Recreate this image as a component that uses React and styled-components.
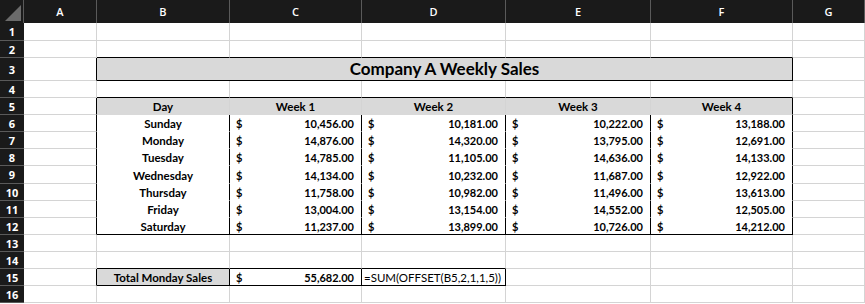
import React from 'react';
import styled, { createGlobalStyle } from 'styled-components';

const GRID = '#d4d4d4';
const INK = '#000';
const FILL = '#d9d9d9';
const HEAD_BG = '#1a1a1a';
const HEAD_LINE = '#5a5a5a';

const COLS = ['A', 'B', 'C', 'D', 'E', 'F', 'G'];
const COL_WIDTHS = [24, 73, 133, 132, 144, 145, 142, 72];
// header + rows 1..16, each height includes its bottom gridline
const ROW_HEIGHTS = [23, 18, 17, 23, 17, 17, 17, 17, 17, 18, 17, 17, 17, 17, 17, 17, 17];

const WEEKS = ['Week 1', 'Week 2', 'Week 3', 'Week 4'];
const SALES = [
  ['Sunday', '10,456.00', '10,181.00', '10,222.00', '13,188.00'],
  ['Monday', '14,876.00', '14,320.00', '13,795.00', '12,691.00'],
  ['Tuesday', '14,785.00', '11,105.00', '14,636.00', '14,133.00'],
  ['Wednesday', '14,134.00', '10,232.00', '11,687.00', '12,922.00'],
  ['Thursday', '11,758.00', '10,982.00', '11,496.00', '13,613.00'],
  ['Friday', '13,004.00', '13,154.00', '14,552.00', '12,505.00'],
  ['Saturday', '11,237.00', '13,899.00', '10,726.00', '14,212.00'],
];

// build the sheet: rows 1..16, columns A..G
const buildSheet = () => {
  const sheet = {};
  for (let r = 1; r <= 16; r++) {
    sheet[r] = COLS.map(() => ({}));
  }
  // title, merged B:F (covered slots point back to the merged cell)
  const title = { kind: 'title', text: 'Company A Weekly Sales', span: 5, fill: FILL, box: { t: 1, r: 1, b: 1, l: 1 } };
  sheet[3][1] = title;
  for (let c = 2; c <= 5; c++) sheet[3][c] = { ...title, covered: true };

  // header row
  ['Day', ...WEEKS].forEach((text, i) => {
    sheet[5][i + 1] = {
      kind: 'head', text, fill: FILL, sep: i < 4,
      box: { t: 1, l: i === 0, r: i === 4 },
    };
  });

  // data rows
  SALES.forEach((row, j) => {
    const r = 6 + j;
    row.forEach((val, i) => {
      sheet[r][i + 1] = {
        kind: i === 0 ? 'day' : 'money', text: val, fill: '#fff',
        box: { l: 1, r: 1, b: r === 12 },
      };
    });
  });

  // total row
  sheet[15][1] = { kind: 'day', text: 'Total Monday Sales', fill: FILL, box: { t: 1, r: 1, b: 1, l: 1 } };
  sheet[15][2] = { kind: 'money', text: '55,682.00', box: { t: 1, r: 1, b: 1, l: 1 } };
  sheet[15][3] = { kind: 'formula', text: '=SUM(OFFSET(B5,2,1,1,5))', box: { t: 1, r: 1, b: 1, l: 1 } };
  return sheet;
};

const SHEET = buildSheet();

const edges = (r, c) => {
  const cell = SHEET[r][c];
  const span = cell.span || 1;
  const next = SHEET[r][c + span];
  const below = r < 16 ? SHEET[r + 1][c] : null;
  const box = cell.box || {};

  let right = GRID;
  if (box.r || (next && next.box && next.box.l)) right = INK;
  else if (cell.sep) right = GRID;
  else if (cell.fill && next && next.fill) right = cell.fill;

  let bottom = GRID;
  if (box.b || (below && below.box && below.box.t)) bottom = INK;
  else if (cell.fill && below && below.fill) bottom = cell.fill;

  return { right, bottom };
};

const GlobalStyle = createGlobalStyle`
  html, body {
    margin: 0;
    padding: 0;
    background: #fff;
  }
  body {
    font-family: Lato, "Liberation Sans", sans-serif;
    color: #000;
  }
`;

const Sheet = styled.div`
  display: grid;
  grid-template-columns: ${COL_WIDTHS.map(w => `${w}px`).join(' ')};
  grid-template-rows: ${ROW_HEIGHTS.map(h => `${h}px`).join(' ')};
  width: 865px;
  height: 304px;
  overflow: hidden;
  background: #fff;
`;

const Corner = styled.div`
  background: ${HEAD_BG};
  border-right: 1px solid ${HEAD_LINE};
  display: flex;
  align-items: flex-end;
  justify-content: flex-end;
  svg { display: block; }
`;

const ColHead = styled.div`
  background: ${HEAD_BG};
  color: #fff;
  border-right: 1px solid ${HEAD_LINE};
  display: flex;
  align-items: center;
  justify-content: center;
  font-family: "Open Sans", sans-serif;
  font-size: 11px;
  font-weight: 600;
`;

const RowHead = styled.div`
  background: ${HEAD_BG};
  color: #fff;
  border-bottom: 1px solid ${HEAD_LINE};
  display: flex;
  align-items: center;
  justify-content: center;
  font-family: "Open Sans", sans-serif;
  font-size: 11px;
  font-weight: 700;
`;

const Cell = styled.div`
  grid-column: span ${p => p.$span};
  display: flex;
  align-items: center;
  justify-content: ${p => p.$align};
  padding: ${p => p.$pad};
  background: ${p => p.$fill};
  border-right: 1px solid ${p => p.$right};
  border-bottom: 1px solid ${p => p.$bottom};
  font-size: ${p => p.$size}px;
  font-weight: ${p => (p.$bold ? 700 : 400)};
  white-space: nowrap;
  overflow: hidden;
  min-width: 0;
`;

const Money = styled.span`
  flex: 1;
  display: flex;
  justify-content: space-between;
`;

const KIND = {
  title: { align: 'center', pad: '0 0 1px', size: 17, bold: true },
  head: { align: 'center', pad: '1px 0 0', size: 11.5, bold: true },
  day: { align: 'center', pad: '1px 0 0', size: 11.5, bold: true },
  money: { align: 'stretch', pad: '1px 7px 0 6px', size: 11, bold: true },
  formula: { align: 'flex-start', pad: '1px 0 0 2px', size: 11.5, bold: false },
  empty: { align: 'flex-start', pad: '0', size: 11, bold: false },
};

const SheetCell = ({ r, c }) => {
  const cell = SHEET[r][c];
  const { right, bottom } = edges(r, c);
  const k = KIND[cell.kind || 'empty'];
  return (
    <Cell
      $span={cell.span || 1}
      $align={k.align}
      $pad={k.pad}
      $size={k.size}
      $bold={k.bold}
      $fill={cell.fill || '#fff'}
      $right={right}
      $bottom={bottom}
    >
      {cell.kind === 'money' ? (
        <Money>
          <span>$</span>
          <span>{cell.text}</span>
        </Money>
      ) : (
        cell.text
      )}
    </Cell>
  );
};

const App = () => (
  <>
    <GlobalStyle />
    <Sheet>
      <Corner>
        <svg width="23" height="23" viewBox="0 0 23 23">
          <polygon points="5,21 21,5 21,21" fill="#6b6b6b" />
        </svg>
      </Corner>
      {COLS.map(col => (
        <ColHead key={col}>{col}</ColHead>
      ))}
      {Object.keys(SHEET).map(key => {
        const r = Number(key);
        return (
          <React.Fragment key={r}>
            <RowHead>{r}</RowHead>
            {SHEET[r].map((cell, c) => (cell.covered ? null : <SheetCell key={c} r={r} c={c} />))}
          </React.Fragment>
        );
      })}
    </Sheet>
  </>
);

export default App;
